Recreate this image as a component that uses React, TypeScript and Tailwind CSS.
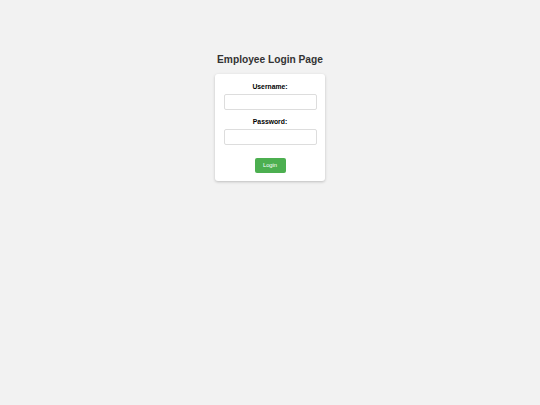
export default function App() {
  return (
    <div
      className="min-h-[405px] w-full bg-[#f2f2f2] flex flex-col items-center pt-[54px]"
      style={{ fontFamily: '"Liberation Sans", Arial, sans-serif' }}
    >
      <h1 className="text-[10.2px] leading-[12px] font-bold text-[#333] mb-[8px]">
        Employee Login Page
      </h1>
      <form className="w-[110px] bg-white rounded-[3px] shadow-[0_1px_3px_rgba(0,0,0,0.22)] px-[8px] pt-[8px] pb-[8.5px] flex flex-col items-center">
        <label className="text-[6.8px] leading-[9px] font-bold text-black mb-[3px]">
          Username:
        </label>
        <input
          type="text"
          className="w-[93px] h-[16px] border border-[#ddd] rounded-[2px] bg-white mb-[6.5px]"
        />
        <label className="text-[6.8px] leading-[9px] font-bold text-black mb-[3.5px]">
          Password:
        </label>
        <input
          type="password"
          className="w-[93px] h-[16px] border border-[#ddd] rounded-[2px] bg-white mb-[13px]"
        />
        <button
          type="button"
          className="w-[31px] h-[14.5px] bg-[#4caf50] text-white text-[5.8px] leading-[14.5px] rounded-[2px]"
        >
          Login
        </button>
      </form>
    </div>
  );
}
